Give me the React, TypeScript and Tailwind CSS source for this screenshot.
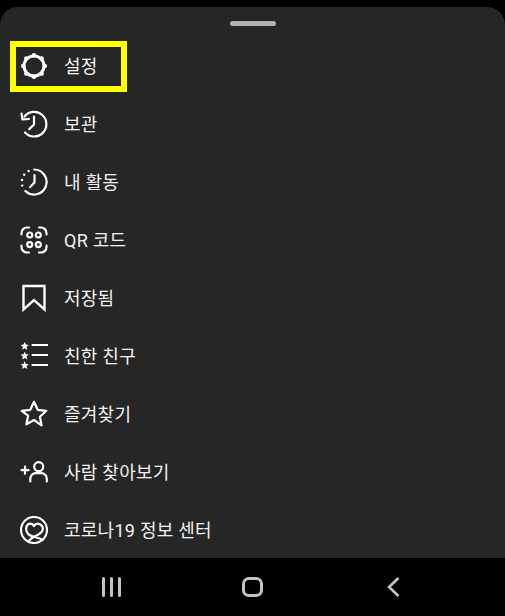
const FONT = "font-['Roboto','Noto_Sans_CJK_KR',sans-serif]";

function Icon({ children }: { children: React.ReactNode }) {
  return (
    <svg
      viewBox="0 0 28 28"
      className="h-7 w-7 shrink-0"
      fill="none"
      stroke="#fff"
      strokeWidth="2.2"
      strokeLinecap="round"
      strokeLinejoin="round"
    >
      {children}
    </svg>
  );
}

const GEAR_BUMPS = [0, 45, 90, 135, 180, 225, 270, 315];

const items = [
  {
    label: "설정",
    icon: (
      <>
        <circle cx="14" cy="14" r="10" strokeWidth="3" />
        {GEAR_BUMPS.map((a) => (
          <circle
            key={a}
            cx={14 + 10.8 * Math.cos((a * Math.PI) / 180)}
            cy={14 + 10.8 * Math.sin((a * Math.PI) / 180)}
            r="2.200"
            fill="#fff"
            stroke="none"
          />
        ))}
      </>
    ),
  },
  {
    label: "보관",
    icon: (
      <>
        <path d="M4.500 6.500A12.300 12.300 0 1 1 5 22.500" />
        <path d="M1.500 3.500l1 6 6.500-.700" />
        <path d="M14 6.500v8l-4.800 4.800" />
      </>
    ),
  },
  {
    label: "내 활동",
    icon: (
      <>
        <path d="M14.200 1.500A12.500 12.500 0 1 1 5.400 23" />
        <path d="M14.500 7v7.500l-4.400 4.600" />
        <circle cx="8.600" cy="3" r="1.200" fill="#fff" stroke="none" />
        <circle cx="4.200" cy="6.800" r="1.200" fill="#fff" stroke="none" />
        <circle cx="2" cy="12" r="1.200" fill="#fff" stroke="none" />
        <circle cx="2.200" cy="17.600" r="1.200" fill="#fff" stroke="none" />
      </>
    ),
  },
  {
    label: "QR 코드",
    icon: (
      <>
        <path d="M1.500 8.500V7A5.500 5.500 0 0 1 7 1.500h2" />
        <path d="M19 1.500h2A5.500 5.500 0 0 1 26.500 7v1.500" />
        <path d="M1.500 19.500V21A5.500 5.500 0 0 0 7 26.500h2" />
        <path d="M26.500 19.500V21a5.500 5.500 0 0 1-5.500 5.500h-2" />
        <circle cx="9.700" cy="9" r="2.500" />
        <circle cx="18.300" cy="9" r="2.500" />
        <circle cx="9.700" cy="18.600" r="2.500" />
        <circle cx="18.300" cy="18.600" r="2.500" />
      </>
    ),
  },
  {
    label: "저장됨",
    icon: <path d="M3.500 2h21v23.500L14 16l-10.500 9.500z" strokeLinecap="butt" strokeLinejoin="miter" strokeWidth="2.400" />,
  },
  {
    label: "친한 친구",
    icon: (
      <>
        <path d="M12.500 3h15M12.500 13h15M12.500 23h15" />
        {[4, 13.700, 23.300].map((y) => (
          <path
            key={y}
            d={`M4.700 ${y - 4}l1.200 2.600 2.900.300-2.200 1.900.700 2.900-2.600-1.500-2.600 1.500.700-2.900-2.200-1.900 2.900-.300z`}
            fill="#fff"
            stroke="none"
          />
        ))}
      </>
    ),
  },
  {
    label: "즐겨찾기",
    icon: <path d="M14 1.800l3.700 8 8.600 1-6.400 5.900 1.700 8.600L14 20l-7.600 4.300 1.700-8.600L1.700 10.800l8.600-1z" />,
  },
  {
    label: "사람 찾아보기",
    icon: (
      <>
        <circle cx="18.700" cy="8.700" r="4.500" />
        <path d="M10.300 23.500v-2.800a5.500 5.500 0 0 1 5.500-5.500h5.500a5.500 5.500 0 0 1 5.500 5.500v2.800" />
        <path d="M1.500 12.200h7M5 8.700v7" />
      </>
    ),
  },
  {
    label: "코로나19 정보 센터",
    icon: (
      <>
        <circle cx="14" cy="14" r="13" />
        <path d="M22.500 24C19 21 9 21 7.500 17C4.500 12 7 7.700 10.500 7.700C12 7.700 13.300 8.700 14 10C14.700 8.700 16 7.700 17.500 7.700C21 7.700 24 11 22.500 14.500C21 17.500 18 19 14.500 20.500C12.500 21.500 10.500 23 9 24.500" />
      </>
    ),
  },
];

export default function App() {
  return (
    <div className={`flex h-[616px] w-[505px] flex-col overflow-hidden bg-black pt-[7px] ${FONT}`}>
      <div className="relative h-[551px] rounded-t-[18px] bg-[#262626]">
        {/* drag handle */}
        <div className="flex justify-center pt-[14px]">
          <div className="h-[5px] w-[46px] rounded-full bg-[#b3b3b3]" />
        </div>

        <ul className="mt-[11px]">
          {items.map((item) => (
            <li key={item.label} className="flex h-[58px] items-center gap-[16px] pl-[20px]">
              <Icon>{item.icon}</Icon>
              <span className="pt-[1px] text-[18px] leading-none tracking-[0.25px] text-[#f2f2f2]">{item.label}</span>
            </li>
          ))}
        </ul>

        {/* highlight box */}
        <div className="absolute left-[10px] top-[34px] h-[51px] w-[117px] border-[6px] border-[#ffff00]" />
      </div>

      {/* android nav bar */}
      <div className="flex flex-1 items-center justify-center">
        <div className="flex w-[141px] justify-center gap-[5px]">
          <span className="h-[20px] w-[3px] rounded-full bg-[#c4c4c4]" />
          <span className="h-[20px] w-[3px] rounded-full bg-[#c4c4c4]" />
          <span className="h-[20px] w-[3px] rounded-full bg-[#c4c4c4]" />
        </div>
        <div className="flex w-[141px] justify-center">
          <span className="h-[20px] w-[21px] rounded-[7px] border-[3px] border-[#c4c4c4]" />
        </div>
        <div className="flex w-[141px] justify-center">
          <svg viewBox="0 0 14 22" className="h-[22px] w-[14px]" fill="none" stroke="#c4c4c4" strokeWidth="2.600">
            <path d="M11.500 2L2 11l9.500 9" />
          </svg>
        </div>
      </div>
    </div>
  );
}
